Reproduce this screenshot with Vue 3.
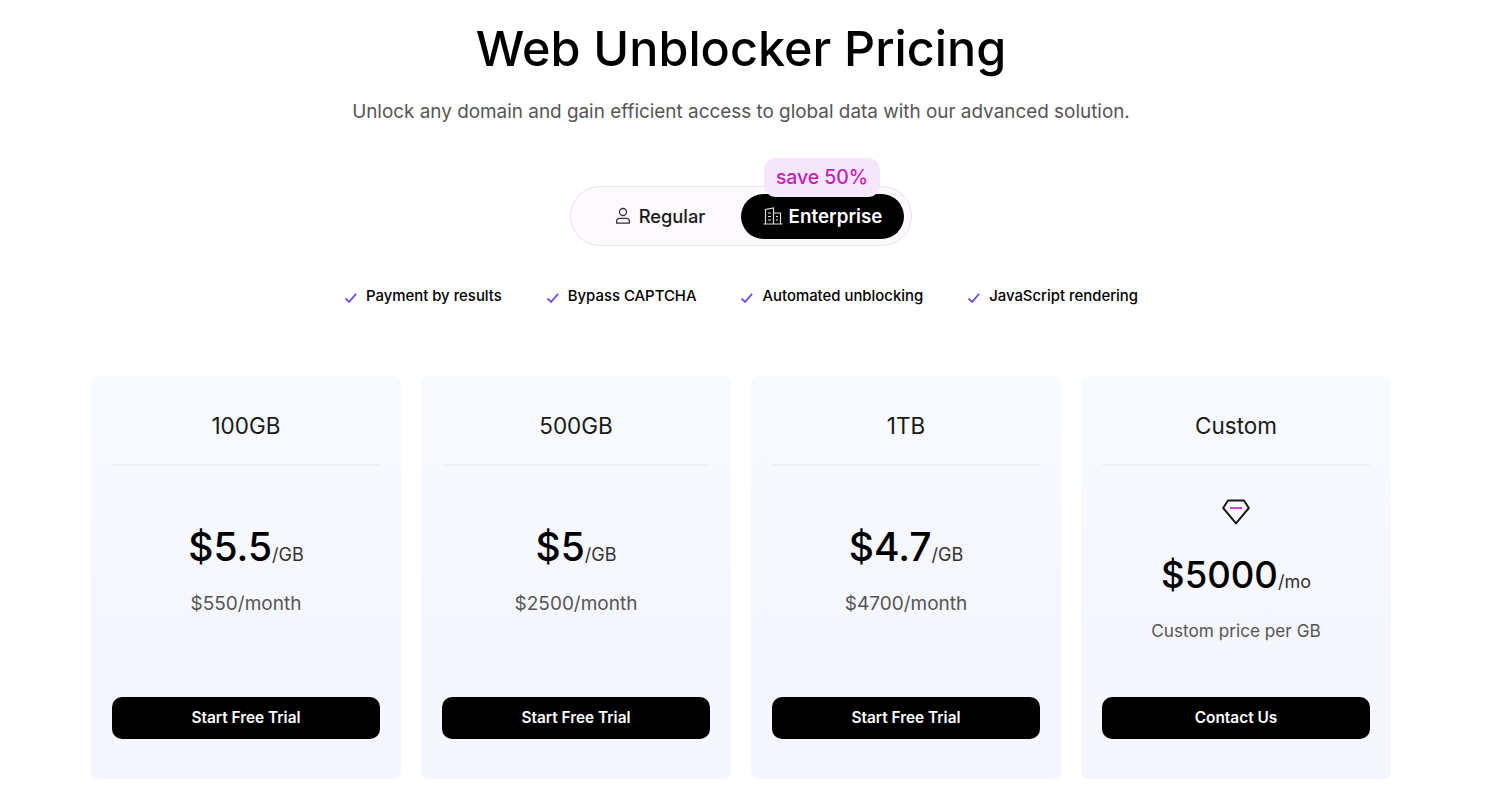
<template>
  <main class="page">
    <h1 class="title">Web Unblocker Pricing</h1>
    <p class="subtitle">Unlock any domain and gain efficient access to global data with our advanced solution.</p>

    <div class="switch">
      <span class="save">save 50%</span>
      <button class="tab">
        <svg width="18" height="18" viewBox="0 0 18 18" fill="none" stroke="#333" stroke-width="1.3">
          <circle cx="9" cy="5" r="3.5" />
          <path d="M2.6 16.2v-1.7a3.2 3.2 0 0 1 3.2-3.2h6.4a3.2 3.2 0 0 1 3.2 3.2v1.7z" stroke-linejoin="round" />
        </svg>
        Regular
      </button>
      <button class="tab active">
        <svg width="20" height="20" viewBox="0 0 20 20" fill="none" stroke="#ddd" stroke-width="1.2">
          <path d="M.5 18h19M2.5 18V3.5l8-1.5V18M10.5 7h7v11M5 7h3M5 10.5h3M5 14h3M13 10.5h2M13 14h2" />
        </svg>
        Enterprise
      </button>
    </div>

    <ul class="features">
      <li v-for="f in features" :key="f">
        <svg width="14" height="14" viewBox="0 0 14 14" fill="none" stroke="#7050dc" stroke-width="1.8">
          <path d="M1.5 7.5l3.6 3.4 7-8" />
        </svg>
        {{ f }}
      </li>
    </ul>

    <section class="cards">
      <article v-for="p in plans" :key="p.name" class="card" :class="{ custom: p.custom }">
        <h2 class="card-name">{{ p.name }}</h2>
        <div class="card-body">
          <svg v-if="p.custom" class="gem" width="30" height="30" viewBox="0 0 30 30" fill="none">
            <path d="M7 3.5h16l4.8 7.5L15 26.3 2.2 11z" stroke="#1a1a1a" stroke-width="2" stroke-linejoin="round" />
            <path d="M9 11h12" stroke="#d61fd0" stroke-width="1.7" />
          </svg>
          <div class="price">{{ p.price }}<span class="unit">{{ p.unit }}</span></div>
          <div class="note">{{ p.note }}</div>
        </div>
        <button class="cta">{{ p.cta }}</button>
      </article>
    </section>
  </main>
</template>

<script setup>
const features = ['Payment by results', 'Bypass CAPTCHA', 'Automated unblocking', 'JavaScript rendering']

const plans = [
  { name: '100GB', price: '$5.5', unit: '/GB', note: '$550/month', cta: 'Start Free Trial' },
  { name: '500GB', price: '$5', unit: '/GB', note: '$2500/month', cta: 'Start Free Trial' },
  { name: '1TB', price: '$4.7', unit: '/GB', note: '$4700/month', cta: 'Start Free Trial' },
  { name: 'Custom', price: '$5000', unit: '/mo', note: 'Custom price per GB', cta: 'Contact Us', custom: true },
]
</script>

<style scoped>
.page {
  width: 1482px;
  height: 800px;
  overflow: hidden;
  display: flex;
  flex-direction: column;
  align-items: center;
  font-family: Inter, "Liberation Sans", sans-serif;
  color: #000;
}

.title {
  margin: 18px 0 0;
  font-size: 48.5px;
  line-height: 62px;
  font-weight: 500;
}

.subtitle {
  margin: 19px 0 0;
  font-size: 18.9px;
  line-height: 26px;
  color: #555;
}

.switch {
  position: relative;
  margin-top: 61px;
  width: 342px;
  height: 60px;
  box-sizing: border-box;
  padding: 7px;
  display: flex;
  justify-content: space-between;
  border: 1px solid #f0dcf5;
  border-radius: 30px;
  background: #fdf9fe;
}

.save {
  position: absolute;
  top: -29px;
  left: 193px;
  width: 116px;
  height: 39px;
  padding-bottom: 2px;
  box-sizing: border-box;
  display: flex;
  align-items: center;
  justify-content: center;
  border-radius: 12px;
  background: #f6e6fc;
  color: #c41fb8;
  font-size: 19.4px;
  font-weight: 500;
}

.tab {
  width: 163px;
  height: 45px;
  padding: 0 0 1px;
  display: flex;
  align-items: center;
  justify-content: center;
  gap: 7px;
  border: 0;
  border-radius: 23px;
  background: none;
  font: inherit;
  font-size: 18.3px;
  font-weight: 500;
  color: #1a1a1a;
}

.tab.active {
  gap: 6px;
  background: #000;
  color: #fff;
  font-size: 18.8px;
  font-weight: 600;
}

.features {
  margin: 38px 0 0;
  padding: 0;
  list-style: none;
  display: flex;
  gap: 44px;
}

.features li {
  display: flex;
  align-items: center;
  gap: 8px;
  font-size: 14.9px;
  line-height: 24px;
  font-weight: 500;
}

.features svg {
  margin-top: 3px;
}

.cards {
  margin-top: 68px;
  display: flex;
  gap: 20px;
}

.card {
  width: 310px;
  height: 403px;
  box-sizing: border-box;
  padding: 0 21px 40px;
  display: flex;
  flex-direction: column;
  border-radius: 8px;
  background: linear-gradient(#f7fafe, #f5f5fe);
}

.card-name {
  margin: 0;
  height: 90px;
  line-height: 100px;
  box-sizing: border-box;
  border-bottom: 2px solid #f0f1f6;
  text-align: center;
  font-size: 22.5px;
  font-weight: 400;
  color: #1a1a1a;
}

.card-body {
  flex: 1;
  padding-top: 56px;
  display: flex;
  flex-direction: column;
  align-items: center;
}

.custom .card-body {
  padding-top: 31px;
}

.gem {
  margin-bottom: 23px;
}

.price {
  font-size: 39px;
  line-height: 50px;
  font-weight: 500;
}

.custom .price {
  font-size: 36.5px;
}

.unit {
  font-size: 18px;
  font-weight: 400;
  color: #333;
}

.note {
  margin-top: 12px;
  font-size: 19px;
  line-height: 24px;
  color: #555;
}

.custom .note {
  margin-top: 12px;
  font-size: 17.2px;
}

.cta {
  height: 42px;
  width: 268px;
  padding-bottom: 2px;
  border: 0;
  border-radius: 10px;
  background: #000;
  color: #fff;
  font: inherit;
  font-size: 15.4px;
  font-weight: 600;
}
</style>
